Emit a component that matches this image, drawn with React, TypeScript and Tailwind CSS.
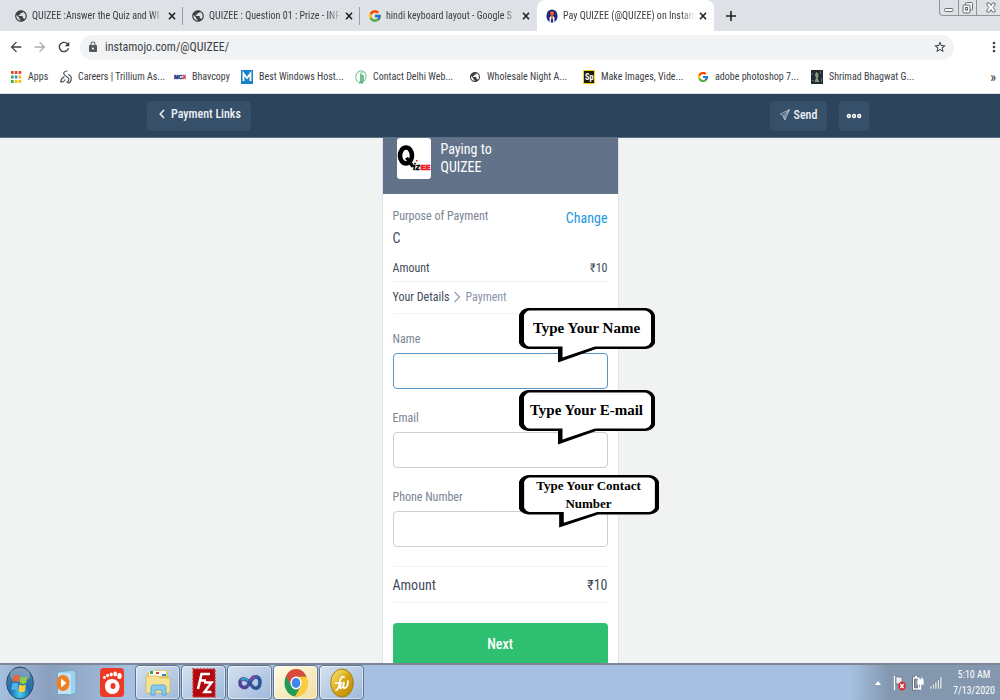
import React from "react";
import { FcGoogle } from "react-icons/fc";
import {
  MdArrowBack,
  MdArrowForward,
  MdLock,
  MdMoreVert,
  MdPublic,
  MdRefresh,
  MdStarBorder,
} from "react-icons/md";

const InstamojoIcon = () => (
  <svg viewBox="0 0 12 14" className="h-3.5 w-3" aria-hidden="true">
    <ellipse cx="6" cy="7" rx="5.6" ry="6.6" fill="#1f2a7a" />
    <circle cx="6" cy="4.2" r="2" fill="#f0592a" />
    <path d="M3.500 13V9.500Q3.500 7 6 7t2.500 2.500V13L7 13.500v-4H5v4z" fill="#f4f5fb" />
    <path d="M5.200 5h1.600v4.500H5.200z" fill="#f0592a" />
  </svg>
);

const AppsIcon = () => (
  <svg viewBox="0 0 12 14" className="h-3.5 w-3" aria-hidden="true">
    <path d="M1 1h2.6v3H1zM4.8 1h2.6v3H4.8zM8.6 1h2.6v3H8.6z" fill="#ea4335" />
    <path d="M1 5.5h2.6v3H1z" fill="#34a853" />
    <path d="M4.8 5.5h2.6v3H4.8z" fill="#4285f4" />
    <path d="M8.6 5.5h2.6v3H8.6zM4.8 10h2.6v3H4.8zM8.6 10h2.6v3H8.6z" fill="#fbbc05" />
    <path d="M1 10h2.6v3H1z" fill="#34a853" />
  </svg>
);

const TrilliumIcon = () => (
  <svg viewBox="0 0 12 14" className="h-3.5 w-3" fill="none" stroke="#55585c" aria-hidden="true">
    <path d="M7.6 1C3.6.8 2.7 3.6 5 5.4l3 2.4c1.800 1.600.6 4-1.600 4.700M4.400 6.600C2.500 7.500 1 9.600.7 11.800c1.800.5 4.300-.5 4.400-2.600M8.300 4.500c2 .7 3.300 2.800 2.900 5.300-.4 2-1.900 3.200-3.500 3.300" strokeWidth="1.200" />
  </svg>
);

const McxIcon = () => (
  <svg viewBox="0 0 12 14" className="h-3.5 w-3" aria-hidden="true">
    <text x="0" y="9" fontSize="5.500" fontWeight="900" fontFamily="Liberation Sans, sans-serif" fill="#15317e" stroke="#15317e" strokeWidth=".4">
      MC<tspan fill="#d7263d" stroke="#d7263d">X</tspan>
    </text>
  </svg>
);

const HostIcon = () => (
  <svg viewBox="0 0 12 14" className="h-3.5 w-3" aria-hidden="true">
    <path d="M0 0h12v14H0z" fill="#1583c5" />
    <path d="M2.500 11V3.500L6 8l3.500-4.500V11" fill="none" stroke="#fff" strokeWidth="1.900" />
  </svg>
);

const DelhiIcon = () => (
  <svg viewBox="0 0 12 14" className="h-3.5 w-3" fill="none" aria-hidden="true">
    <path d="M3 12C0 9.500-.1 4.500 3.200 1.900 6-.2 10.500.9 11 5.500c.2 2-.4 4.200-1.800 5.700" stroke="#7fc79b" strokeWidth="1.100" />
    <path d="M6 4v6.500C6 12 5 13 3.800 12.800M8 5v6c0 1.200-.9 2-2 2.200" stroke="#45a96d" strokeWidth="1.500" />
    <path d="M5 3h3" stroke="#7fc79b" />
  </svg>
);

const SparkIcon = () => (
  <svg viewBox="0 0 12 14" className="h-3.5 w-3" aria-hidden="true">
    <path d="M.5.5h11v13H.5z" fill="#1c1a10" stroke="#f5d51c" />
    <text x="2" y="10" fontSize="8.500" fontWeight="700" fontFamily="Roboto Condensed, sans-serif" fill="#fff">Sp</text>
  </svg>
);

const BookIcon = () => (
  <svg viewBox="0 0 12 14" className="h-3.5 w-3" aria-hidden="true">
    <path d="M0 0h12v14H0z" fill="#1f2c33" />
    <path d="M5 2l2 1 .6 3-1 2 1.800 4H3.600L5 8 4 5z" fill="#8c9672" />
    <path d="M1 3h1v2H1zM9 1h1v3H9zM1 10h2v1H1zM10 8h1v4h-1z" fill="#526b76" />
  </svg>
);

const GlobeIcon = () => <MdPublic className="size-3.5 text-[#3c4043]" />;
const GoogleIcon = () => <FcGoogle className="size-3.5" />;

type TabItem = { title: string; icon: React.ReactNode; active?: boolean; divider?: boolean };

const tabs: TabItem[] = [
  { title: "QUIZEE :Answer the Quiz and WI", icon: <GlobeIcon />, divider: true },
  { title: "QUIZEE : Question 01 : Prize - INF", icon: <GlobeIcon />, divider: true },
  { title: "hindi keyboard layout - Google S", icon: <GoogleIcon /> },
  { title: "Pay QUIZEE (@QUIZEE) on Instam", icon: <InstamojoIcon />, active: true },
];

const bookmarks = [
  { title: "Apps", icon: <AppsIcon />, width: "w-[50px]" },
  { title: "Careers | Trillium As...", icon: <TrilliumIcon />, width: "w-[114px]" },
  { title: "Bhavcopy", icon: <McxIcon />, width: "w-[67px]" },
  { title: "Best Windows Host...", icon: <HostIcon />, width: "w-[114px]" },
  { title: "Contact Delhi Web...", icon: <DelhiIcon />, width: "w-[114px]" },
  { title: "Wholesale Night A...", icon: <GlobeIcon />, width: "w-[114px]" },
  { title: "Make Images, Vide...", icon: <SparkIcon />, width: "w-[114px]" },
  { title: "adobe photoshop 7...", icon: <GoogleIcon />, width: "w-[114px]" },
  { title: "Shrimad Bhagwat G...", icon: <BookIcon />, width: "w-[114px]" },
];

function TabStrip() {
  return (
    <div className="relative flex h-[31px] shrink-0 bg-[#dee1e6] pl-1.5">
      {tabs.map((tab) => (
        <div
          key={tab.title}
          className={`flex w-[177px] items-center gap-1 pl-2 ${tab.active ? "rounded-t-lg bg-white" : ""}`}
        >
          <span className="flex w-3.5 shrink-0 justify-center">{tab.icon}</span>
          <span className="min-w-0 flex-1 overflow-hidden mask-r-from-90% text-[10px] leading-4 whitespace-nowrap text-[#3c4043]">
            {tab.title}
          </span>
          <button aria-label={`Close ${tab.title}`} className="shrink-0 pr-0.5">
            <svg viewBox="0 0 8 8" className="size-2" fill="none" stroke="#202124" strokeWidth="1.600">
              <path d="M1 .8 7 7.200M7 .8 1 7.200" />
            </svg>
          </button>
          <span className={`h-[18px] w-px ${tab.divider ? "bg-[#9a9da2]" : ""}`} />
        </div>
      ))}
      <button aria-label="New tab" className="ml-3 self-center">
        <svg viewBox="0 0 10 10" className="size-2.5" stroke="#202124" strokeWidth="1.600">
          <path d="M5 0v10M0 5h10" />
        </svg>
      </button>
      <div className="absolute top-0 right-0 flex h-4 w-[61px] rounded-bl border-b border-l border-[#8f9297] text-[#6b6e73]">
        <button aria-label="Minimize" className="flex w-[19px] items-center justify-center border-r border-[#8f9297]">
          <svg viewBox="0 0 10 10" className="size-2.5" fill="#fff" stroke="currentColor">
            <rect x=".5" y="5.500" width="8.500" height="3" rx="1" />
          </svg>
        </button>
        <button aria-label="Restore" className="flex w-[18px] items-center justify-center border-r border-[#8f9297]">
          <svg viewBox="0 0 12 12" className="size-3" fill="#f4f5f7" stroke="currentColor">
            <rect x="3.500" y=".5" width="7" height="7.500" rx="1" />
            <rect x="1" y="3" width="7" height="8" rx="1" />
            <rect x="3.500" y="5.500" width="2" height="2.500" />
          </svg>
        </button>
        <button aria-label="Close window" className="flex flex-1 items-center justify-end pr-1">
          <svg viewBox="0 0 10 11" className="h-[11px] w-2.5" fill="#fff" stroke="currentColor">
            <path d="M1 1h2.500L5 3.500 6.500 1H9v2L7.200 5.500 9 8v2H6.500L5 7.500 3.500 10H1V8l1.800-2.500L1 3z" />
          </svg>
        </button>
      </div>
    </div>
  );
}

function Toolbar() {
  return (
    <div className="flex h-8 shrink-0 items-center bg-white pl-2">
      <button aria-label="Back" className="w-6"><MdArrowBack className="size-4 text-[#3c4043]" /></button>
      <button aria-label="Forward" className="w-6"><MdArrowForward className="size-4 text-[#a9acb0]" /></button>
      <button aria-label="Reload" className="w-6"><MdRefresh className="size-4 text-[#3c4043]" /></button>
      <div className="flex h-[25px] flex-1 items-center gap-1.5 rounded-full bg-[#f1f3f4] px-[7px]">
        <MdLock className="size-3 text-[#55585c]" />
        <input
          aria-label="Address"
          defaultValue="instamojo.com/@QUIZEE/"
          className="min-w-0 flex-1 bg-transparent text-xs text-[#3c4043] outline-none"
        />
        <button aria-label="Bookmark this page"><MdStarBorder className="size-3.5 text-[#3c4043]" /></button>
      </div>
      <button aria-label="Browser menu" className="ml-8 w-3.5"><MdMoreVert className="size-4 text-[#3c4043]" /></button>
    </div>
  );
}

function BookmarkBar() {
  return (
    <nav aria-label="Bookmarks" className="flex h-[31px] shrink-0 items-center border-b border-[#dcdfe6] bg-white pb-0.5 pl-2.5">
      {bookmarks.map((b) => (
        <a key={b.title} href="#" className={`flex shrink-0 items-center gap-1.5 text-[10px] leading-4 whitespace-nowrap text-[#3c4043] ${b.width}`}>
          <span className="flex w-3 shrink-0 justify-center">{b.icon}</span>
          {b.title}
        </a>
      ))}
      <button aria-label="More bookmarks" className="ml-auto pr-1 text-sm text-[#3c4043]">»</button>
    </nav>
  );
}

function SiteHeader() {
  return (
    <header className="flex h-11 shrink-0 items-center justify-between border-b border-[#5c7085] bg-[#2d455c] pr-[131px] pl-[147px] text-xs font-medium text-[#eef2f6]">
      <button className="flex h-[30px] items-center gap-1.5 rounded bg-[#365069] pr-2.5 pb-1 pl-3 whitespace-nowrap">
        <svg viewBox="0 0 6 10" className="h-2.5 w-1.5" fill="none" stroke="currentColor" strokeWidth="1.500">
          <path d="M5 1 1.200 5 5 9" />
        </svg>
        Payment Links
      </button>
      <div className="flex gap-3">
        <button className="flex h-[30px] w-[57px] items-center justify-center gap-1 rounded bg-[#365069] pb-0.5">
          <svg viewBox="0 0 10 12" className="h-3 w-2.5" fill="none" stroke="#b9c5d1" strokeWidth=".8">
            <path d="M9.500.7.5 5l2.600 1.500L4.800 11 9.500.7 3.100 6.500M4.800 11l.6-4.500 4.100-5.800M5.400 6.500 3.100 8.800" />
          </svg>
          Send
        </button>
        <button aria-label="More actions" className="flex h-[30px] w-[30px] items-center justify-center rounded bg-[#365069]">
          <svg viewBox="0 0 16 6" className="h-1.5 w-4" fill="#6d8095" stroke="#fff" strokeWidth="1.400">
            <circle cx="2.800" cy="3" r="1.500" />
            <circle cx="8" cy="3" r="1.500" />
            <circle cx="13.200" cy="3" r="1.500" />
          </svg>
        </button>
      </div>
    </header>
  );
}

function Bubble({ children, place, wide = false }: { children: React.ReactNode; place: string; wide?: boolean }) {
  return (
    <div className={`absolute left-[126px] ${place} ${wide ? "h-[53px] w-[140px]" : "h-[55px] w-[136px]"}`}>
      <svg viewBox="0 0 136 55" preserveAspectRatio="none" className="absolute inset-0 size-full" aria-hidden="true">
        <path d="M9 0H127Q134 1 136 7V35Q134 40 127 41H77L39 54.500V41H9Q2 40 0 35V7Q2 1 9 0Z" fill="#000" />
        <path d="M10 2.500H126Q130 3 132 7V34Q130 38 126 38.500H76L43.500 49.500V38.500H10Q7 38 5 34V7Q7 3 10 2.500Z" fill="#fff" />
      </svg>
      <p
        className={`relative flex h-10 items-center justify-center text-center font-bold text-black [font-family:'Liberation_Serif',serif] ${
          wide ? "px-3 text-[13px] leading-[18px]" : "text-[15px] whitespace-nowrap"
        }`}
      >
        {children}
      </p>
    </div>
  );
}

const fields = [
  { id: "name", label: "Name", type: "text", hint: "Type Your Name", border: "border-[#5795c8]", place: "-top-[21px]" },
  { id: "email", label: "Email", type: "email", hint: "Type Your E-mail", border: "border-[#cfcfcf]", place: "-top-[18px]" },
  { id: "phone", label: "Phone Number", type: "tel", hint: "Type Your Contact Number", border: "border-[#cfcfcf]", place: "-top-3", wide: true },
];

function PaymentCard() {
  return (
    <section className="w-[237px] shrink-0 border-x border-[#dde3f3] bg-white text-[#3f4c5c]">
      <div className="flex h-14 gap-2.5 bg-[#627389] pl-3.5 text-sm leading-[18px] text-white">
        <svg viewBox="0 0 34 41" className="h-[41px] w-[34px]" role="img" aria-label="Quizee logo">
          <rect width="34" height="41" rx="3" fill="#fff" />
          <ellipse cx="9" cy="17.500" rx="6" ry="8" fill="none" stroke="#000" strokeWidth="4.600" />
          <path d="M8 20.500l3-1.500 7 9.500-3.500 1z" fill="#000" />
          <text x="16" y="32" fontSize="9" fontWeight="900" fontStyle="italic" fontFamily="Liberation Sans, sans-serif" fill="#000" stroke="#000" strokeWidth=".4">iz</text>
          <path d="M19 22h1.500v1.500H19z" fill="#f0141e" />
          <text x="23.500" y="32" fontSize="7.500" fontWeight="900" fontFamily="Liberation Sans, sans-serif" fill="#f0141e" stroke="#f0141e" strokeWidth=".7">EE</text>
        </svg>
        <p className="pt-0.5">
          Paying to
          <br />
          QUIZEE
        </p>
      </div>
      <div className="px-2.5 pt-3">
        <div className="flex items-start justify-between">
          <span className="text-xs leading-5 text-[#7a8492]">Purpose of Payment</span>
          <a href="#" className="text-sm leading-6 text-[#1e96e0]">Change</a>
        </div>
        <p className="text-sm leading-4">C</p>
        <div className="mt-3 flex items-center justify-between border-b border-[#eef1f5] pb-[3px] text-xs leading-5">
          <span>Amount</span>
          <span>₹10</span>
        </div>
        <div className="flex h-8 items-center gap-1 border-b border-[#f1f3f6] pb-0.5 text-xs">
          <span>Your Details</span>
          <svg viewBox="0 0 8 12" className="h-3 w-2 shrink-0" fill="none" stroke="#8d99ab" strokeWidth="1.200">
            <path d="M1.500.8 6.500 6l-5 5.200" />
          </svg>
          <span className="text-[#8995a8]">Payment</span>
        </div>
        <form className="pt-[15px]">
          {fields.map((f) => (
            <div key={f.id} className="relative mb-[19px]">
              <label htmlFor={f.id} className="mb-1 block text-xs leading-5 text-[#7a8492]">{f.label}</label>
              <input id={f.id} type={f.type} className={`block h-9 w-full rounded border bg-white px-2 text-sm outline-none ${f.border}`} />
              <Bubble place={f.place} wide={f.wide}>{f.hint}</Bubble>
            </div>
          ))}
          <div className="flex h-[37px] items-center justify-between border-y border-[#f0f3f7] text-sm">
            <span>Amount</span>
            <span>₹10</span>
          </div>
          <button type="button" className="mt-5 h-[42px] w-full rounded bg-[#2fbf71] text-sm font-medium text-white">Next</button>
        </form>
      </div>
    </section>
  );
}

const StartOrb = () => (
  <svg viewBox="0 0 28 34" className="h-[34px] w-7">
    <defs>
      <radialGradient id="orb" cx=".5" cy=".85" r=".8">
        <stop offset="0" stopColor="#45d0f5" />
        <stop offset=".45" stopColor="#1e6fae" />
        <stop offset="1" stopColor="#5b7d9f" />
      </radialGradient>
    </defs>
    <ellipse cx="14" cy="17" rx="13.300" ry="16" fill="url(#orb)" stroke="#264b70" />
    <ellipse cx="14" cy="9" rx="10" ry="7" fill="#fff" opacity=".25" />
    <path d="M7.500 10c2-1.500 4-1.500 6-.2l-1 6.500c-2-1.300-4-1.300-6 0z" fill="#f1652a" />
    <path d="M14.800 10.500c2 1.200 4 1.200 6.500-.3l-1.100 6.800c-2.200 1.400-4.200 1.300-6.400 0z" fill="#9aca3c" />
    <path d="M6.200 17.800c2-1.300 4-1.300 6.100 0l-1.100 6.700c-2-1.300-4-1.300-6.100 0z" fill="#4fb4e8" />
    <path d="M13.500 18.500c2.200 1.300 4.200 1.400 6.400 0l-1.100 6.800c-2.200 1.300-4.200 1.300-6.400 0z" fill="#fccf3a" />
  </svg>
);

const MediaIcon = () => (
  <svg viewBox="0 0 24 28" className="h-7 w-6">
    <path d="M4 3 18 1l4 2v21l-5 2-13-1z" fill="#9fd0ec" stroke="#6ba7cc" />
    <path d="M4 4h13v21H4z" fill="#c1e2f4" />
    <ellipse cx="9" cy="14" rx="6.500" ry="8" fill="#f07e22" />
    <path d="M7 9.500v9l5.500-4.500z" fill="#fff" />
  </svg>
);

const GomIcon = () => (
  <svg viewBox="0 0 24 30" className="h-[30px] w-6">
    <rect width="24" height="29" rx="4" fill="#ee3a24" />
    <path d="M12 11c5 0 7.500 4 7.500 7.500 0 4.500-3 7.500-7 7.500S5.500 23.500 5 19c-.4-4.500 2.500-8 7-8z" fill="#fff" />
    <g fill="#fff">
      <ellipse cx="4.500" cy="9.500" rx="1.400" ry="1.700" />
      <ellipse cx="7.600" cy="7.500" rx="1.500" ry="1.800" />
      <ellipse cx="11.200" cy="6.500" rx="1.600" ry="2" />
      <ellipse cx="15.200" cy="6" rx="1.900" ry="2.400" />
      <ellipse cx="19.500" cy="8" rx="2.200" ry="2.900" />
    </g>
    <ellipse cx="13" cy="18" rx="2.500" ry="3" fill="#ee3a24" />
  </svg>
);

const FolderIcon = () => (
  <svg viewBox="0 0 26 29" className="h-[29px] w-[26px]">
    <path d="M2 4h6l2-2h13v22H2z" fill="#e6ca68" />
    <path d="M4 3h17v5H4z" fill="#f8fbff" />
    <path d="M5 3h3v3H5z" fill="#35a845" /><path d="M11 4h3v2h-3z" fill="#d33636" /><path d="M17 6h4v2h-4z" fill="#3d82cc" />
    <path d="M1 8h12l2 2h10v15H1z" fill="#f6e295" stroke="#d3b44e" strokeWidth=".7" />
    <path d="M6 27v-7c0-2 1-3 3-3h9c2 0 3 1 3 3v7h-4v-5h-7v5z" fill="#86caed" stroke="#5ba8d5" />
  </svg>
);

const FileZillaIcon = () => (
  <svg viewBox="0 0 24 30" className="h-[30px] w-6">
    <path d="M1 1h22v28H1z" fill="#b3080d" stroke="#ca3c37" strokeWidth="1.500" strokeDasharray="2 1.300" />
    <path d="M6 21 9.500 6H18M8 12.500h6M12 14.500h7.500L12.500 24h7" fill="none" stroke="#fff" strokeWidth="2.500" />
  </svg>
);

const StudioIcon = () => (
  <svg viewBox="0 0 24 18" className="h-[18px] w-6" fill="none" strokeWidth="3.500">
    <path d="M10 11.500C7.500 15 2 13.500 2 9s4.500-5.500 8-2l4 5" stroke="#514498" />
    <path d="M10 11.500c3-5.500 5.500-9.500 9-8.500 4 1.200 4 9.500 0 11-2 .7-4-.5-5-2" stroke="#28579b" />
    <path d="M12 7c2-3.500 4.500-5 7-4" stroke="#6850a0" />
    <path d="M3 6.500c2-3 5-2.500 7 .5" stroke="#35a4bf" strokeWidth="2" />
  </svg>
);

const ChromeIcon = () => (
  <svg viewBox="0 0 24 28" className="h-7 w-6">
    <ellipse cx="12" cy="14" rx="11.500" ry="13.500" fill="#249a58" />
    <path d="M2 7.200A11.500 13.500 0 0 1 22.500 7.800H12L6.500 15z" fill="#d94b3d" />
    <path d="M22.500 7.800A11.500 13.500 0 0 1 11 27.500L17 17l-5-9.200z" fill="#fbcb3c" />
    <ellipse cx="12" cy="14" rx="5.600" ry="6.500" fill="#fff" />
    <ellipse cx="12" cy="14" rx="4.300" ry="5" fill="#4285e8" />
  </svg>
);

const GoldIcon = () => (
  <svg viewBox="0 0 24 30" className="h-[30px] w-6">
    <defs>
      <linearGradient id="gold" x1="0" y1="0" x2="1" y2="1">
        <stop offset="0" stopColor="#fff184" /><stop offset=".5" stopColor="#d7a817" /><stop offset="1" stopColor="#bc8505" />
      </linearGradient>
    </defs>
    <ellipse cx="12" cy="15" rx="11.300" ry="14" fill="url(#gold)" stroke="#aa7b0d" />
    <path d="M6 22c3 0 3-5 4-9 .7-3 2-5 4-4M5.500 15h6M11 15l-1 5c2 1 4-2 4-6-1 4-1 7 1 6 2-.8 3-4 3-7" fill="none" stroke="#fff" strokeWidth="1.700" strokeLinecap="round" />
  </svg>
);

const running = [
  { label: "Windows Explorer", icon: <FolderIcon /> },
  { label: "FileZilla", icon: <FileZillaIcon /> },
  { label: "Visual Studio", icon: <StudioIcon /> },
  { label: "Google Chrome", icon: <ChromeIcon />, active: true },
  { label: "Jewellery Manager", icon: <GoldIcon /> },
];

function Taskbar() {
  return (
    <footer className="flex h-[37px] shrink-0 items-center border-t-2 border-[#7b8795] bg-[linear-gradient(to_right,#a5bfde_0%,#8a9fbd_5%,#a5c0e0_13%,#a5c0e0_85%,#8397af_89%)]">
      <button aria-label="Start" className="ml-1.5 w-[46px]"><StartOrb /></button>
      <button aria-label="Media Player" className="w-[46px] pl-0.5"><MediaIcon /></button>
      <button aria-label="GOM Player" className="w-[37px] pl-0.5"><GomIcon /></button>
      <div className="flex h-full gap-px">
        {running.map((app) => (
          <button
            key={app.label}
            aria-label={app.label}
            className={`flex h-full w-[45px] items-center justify-center rounded-sm border border-[#62758f] bg-linear-to-br inset-ring inset-ring-white/50 ${
              app.active ? "from-[#fffbe9] to-[#f1dda0]" : "from-[#d5e1ef] to-[#9fb9da]"
            }`}
          >
            {app.icon}
          </button>
        ))}
      </div>
      <div className="ml-auto flex h-full items-center gap-1.5 pr-1">
        <svg viewBox="0 0 6 4" className="mr-1.5 h-1 w-1.5"><path d="M0 4 3 0l3 4z" fill="#fff" /></svg>
        <svg viewBox="0 0 13 16" className="h-4 w-[13px]">
          <path d="M1.500 1v14" stroke="#fff" strokeWidth="1.300" />
          <path d="M3 2c2-1 3 1 6 0v7c-3 1-4-1-6 0z" fill="#e9eef4" stroke="#526173" strokeWidth=".6" />
          <ellipse cx="9" cy="11" rx="3.800" ry="4.500" fill="#d92f2f" />
          <path d="m7.300 9 3.400 4M10.700 9l-3.400 4" stroke="#fff" strokeWidth="1.200" />
        </svg>
        <svg viewBox="0 0 12 16" className="h-4 w-3" fill="none" stroke="#fff">
          <path d="M1.500 3h5v11h-5zM3 1.500h2" stroke="#3f4d5e" strokeWidth="2.500" />
          <path d="M1.500 3h5v11h-5zM3 1.500h2" strokeWidth="1.300" />
          <path d="M6 5h5v4H6zM7 2.500v2.500M10 2.500v2.500M8.500 9v5H7" fill="#fff" strokeWidth="1.300" />
        </svg>
        <svg viewBox="0 0 12 12" className="h-3 w-3">
          <path d="M0 9h1.800v3H0zM2.500 7h1.800v5H2.500zM5 5h1.800v7H5zM7.500 3h1.800v9H7.500zM10 0h1.800v12H10z" fill="#f4f7fa" stroke="#56677b" strokeWidth=".4" />
        </svg>
        <div className="ml-1 w-11 text-center text-[10px] leading-4 whitespace-nowrap text-white">
          5:10 AM
          <br />
          7/13/2020
        </div>
      </div>
    </footer>
  );
}

export default function App() {
  return (
    <div className="flex h-screen flex-col overflow-hidden bg-[#f1f3f3] [font-family:'Roboto_Condensed',Roboto,sans-serif]">
      <TabStrip />
      <Toolbar />
      <BookmarkBar />
      <SiteHeader />
      <main className="flex min-h-0 flex-1 items-start justify-center overflow-hidden">
        <PaymentCard />
      </main>
      <Taskbar />
    </div>
  );
}
